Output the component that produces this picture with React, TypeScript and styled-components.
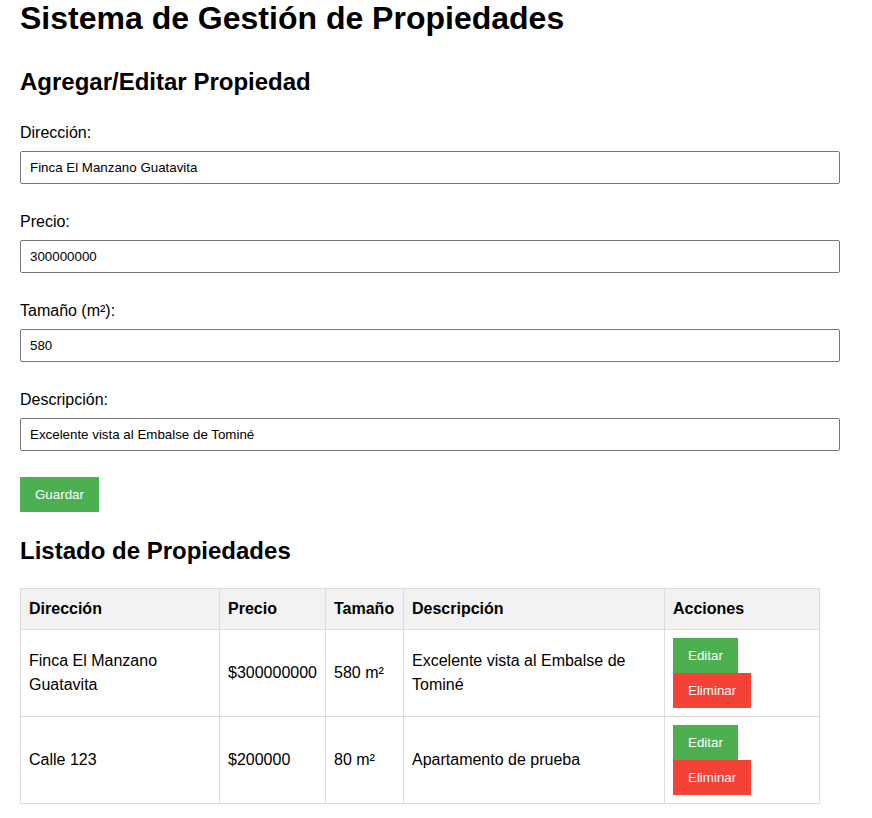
import * as React from 'react';
import styled, { createGlobalStyle } from 'styled-components';

type Property = {
  address: string;
  price: number;
  size: number;
  description: string;
};

const properties: Property[] = [
  {
    address: 'Finca El Manzano Guatavita',
    price: 300000000,
    size: 580,
    description: 'Excelente vista al Embalse de Tominé',
  },
  {
    address: 'Calle 123',
    price: 200000,
    size: 80,
    description: 'Apartamento de prueba',
  },
];

const fields = [
  { id: 'direccion', label: 'Dirección:', value: 'Finca El Manzano Guatavita' },
  { id: 'precio', label: 'Precio:', value: '300000000' },
  { id: 'tamano', label: 'Tamaño (m²):', value: '580' },
  { id: 'descripcion', label: 'Descripción:', value: 'Excelente vista al Embalse de Tominé' },
];

const columnWidths = [199, 106, 78, 261, 155];

function App() {
  return (
    <>
      <GlobalStyle />
      <Page>
        <Title>Sistema de Gestión de Propiedades</Title>

        <SectionTitle>Agregar/Editar Propiedad</SectionTitle>
        <Form onSubmit={(e) => e.preventDefault()}>
          {fields.map((field) => (
            <FieldGroup key={field.id}>
              <Label htmlFor={field.id}>{field.label}</Label>
              <Input id={field.id} type='text' defaultValue={field.value} />
            </FieldGroup>
          ))}
          <ActionButton type='submit' $variant='save'>
            Guardar
          </ActionButton>
        </Form>

        <SectionTitle $listing>Listado de Propiedades</SectionTitle>
        <Table>
          <colgroup>
            {columnWidths.map((w, i) => (
              <col key={i} style={{ width: w }} />
            ))}
          </colgroup>
          <thead>
            <tr>
              <HeadCell>Dirección</HeadCell>
              <HeadCell>Precio</HeadCell>
              <HeadCell>Tamaño</HeadCell>
              <HeadCell>Descripción</HeadCell>
              <HeadCell>Acciones</HeadCell>
            </tr>
          </thead>
          <tbody>
            {properties.map((p, index) => (
              <tr key={index}>
                <Cell>{p.address}</Cell>
                <Cell>${p.price}</Cell>
                <Cell>{p.size} m²</Cell>
                <Cell>{p.description}</Cell>
                <Cell>
                  <ButtonStack>
                    <ActionButton $variant='edit'>Editar</ActionButton>
                    <ActionButton $variant='delete'>Eliminar</ActionButton>
                  </ButtonStack>
                </Cell>
              </tr>
            ))}
          </tbody>
        </Table>
      </Page>
    </>
  );
}

const GlobalStyle = createGlobalStyle`
  html, body {
    margin: 0;
    padding: 0;
    background: #ffffff;
  }
  body {
    font-family: "Liberation Sans", Arial, sans-serif;
    color: #000000;
  }
`;

const Page = styled.div`
  padding: 0 20px 20px;
`;

const Title = styled.h1`
  margin: 0;
  font-size: 32px;
  line-height: 37px;
  font-weight: 700;
`;

const SectionTitle = styled.h2<{ $listing?: boolean }>`
  margin: ${({ $listing }) => ($listing ? '25px 0 23px' : '31px 0 27px')};
  font-size: 24px;
  line-height: 28px;
  font-weight: 700;
`;

const Form = styled.form`
  display: flex;
  flex-direction: column;
  align-items: flex-start;
`;

const FieldGroup = styled.div`
  display: flex;
  flex-direction: column;
  margin-bottom: 28px;

  &:nth-last-of-type(1) {
    margin-bottom: 26px;
  }
`;

const Label = styled.label`
  font-size: 16px;
  line-height: 18px;
  margin: 1px 0 9px;
`;

const Input = styled.input`
  box-sizing: border-box;
  width: 820px;
  height: 33px;
  padding: 0 9px;
  border: 1px solid #767676;
  border-radius: 2px;
  font-family: "Liberation Sans", Arial, sans-serif;
  font-size: 13.33px;
  color: #000000;
  background: #ffffff;
  outline: none;
`;

const variantColors = {
  save: '#4caf50',
  edit: '#4caf50',
  delete: '#f44336',
};

const ActionButton = styled.button<{ $variant: keyof typeof variantColors }>`
  box-sizing: border-box;
  height: 35px;
  padding: 0 15px;
  border: none;
  border-radius: 0;
  background: ${({ $variant }) => variantColors[$variant]};
  color: #ffffff;
  font-family: "Liberation Sans", Arial, sans-serif;
  font-size: 13.33px;
  cursor: pointer;
`;

const Table = styled.table`
  width: 799px;
  table-layout: fixed;
  border-collapse: collapse;
  font-size: 16px;
  line-height: 24px;
`;

const HeadCell = styled.th`
  border: 1px solid #dddddd;
  padding: 8px;
  background: #f2f2f2;
  text-align: left;
  font-weight: 700;
`;

const Cell = styled.td`
  border: 1px solid #dddddd;
  padding: 8px;
  vertical-align: middle;
`;

const ButtonStack = styled.div`
  display: flex;
  flex-direction: column;
  align-items: flex-start;
`;

export default App;
